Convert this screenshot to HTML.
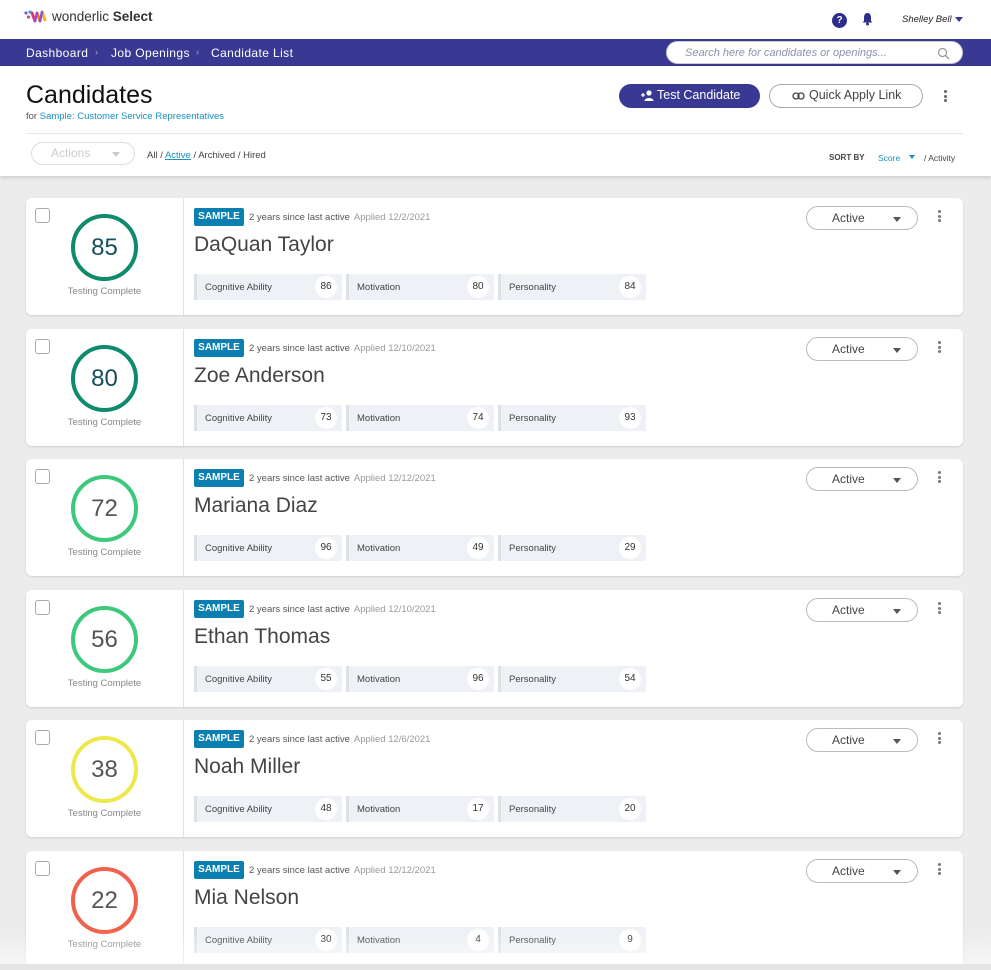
<!DOCTYPE html>
<html><head><style>
*{box-sizing:border-box;margin:0;padding:0}
body{width:991px;height:970px;overflow:hidden;background:#ececec;font-family:"Liberation Sans",sans-serif;color:#333;position:relative}
.abs{position:absolute}
.top{position:absolute;left:0;top:0;width:991px;height:39px;background:#fff}
.nav{position:absolute;left:0;top:39px;width:991px;height:27px;background:#393993;color:#fff;font-size:12px;letter-spacing:.4px}
.nav .sep{position:absolute;top:8px;font-size:9px;color:#aab}
.hdr{position:absolute;left:0;top:66px;width:991px;height:110px;background:#fff;box-shadow:0 2px 3px rgba(0,0,0,.12)}
.card{position:absolute;left:26px;width:937px;height:117px;background:#fff;border-radius:6px;box-shadow:0 1px 2px rgba(0,0,0,.12)}
.cb{position:absolute;left:9px;top:10px;width:15px;height:15px;border:1px solid #aaa;border-radius:3px}
.ring{position:absolute;left:45px;top:16px;width:67px;height:67px;border-radius:50%;border:4px solid;display:flex;align-items:center;justify-content:center;font-size:24px;color:#555}
.tc{position:absolute;left:0;width:157px;top:88px;text-align:center;font-size:9.5px;color:#888}
.div{position:absolute;left:157px;top:0;bottom:0;border-left:1px solid #e2e2e2}
.badge{position:absolute;left:168px;top:10px;width:50px;height:18px;background:#0a7fb0;color:#fff;font-size:10px;font-weight:bold;text-align:center;line-height:18px;border-radius:2px}
.since{position:absolute;left:223px;top:14px;font-size:9.5px;color:#555}
.since span{color:#999;margin-left:4px}
.name{position:absolute;left:168px;top:35px;font-size:21px;color:#444}
.chip{position:absolute;top:76px;width:148px;height:26px;background:#eef1f5;border-left:3px solid #dde1e6;font-size:9.5px;color:#444;padding:8px 8px}
.chip i{position:absolute;right:5px;top:2px;width:22px;height:22px;border-radius:50%;background:#fff;font-style:normal;text-align:center;line-height:22px;font-size:10px;color:#333}
.st{position:absolute;left:780px;top:8px;width:112px;height:24px;border:1px solid #bbb;border-radius:12px;font-size:12px;color:#444;padding:4px 0 0 25px}
.st:after{content:"";position:absolute;right:16px;top:10px;border:4px solid transparent;border-top:5px solid #555}
.keb{position:absolute;left:912px;top:12px;width:3px}
.keb b{display:block;width:3px;height:3px;border-radius:50%;background:#777;margin-bottom:1.5px}
</style></head><body>
<div class="top">
 <svg class="abs" style="left:24px;top:10px" width="26" height="13" viewBox="0 0 26 13">
  <circle cx="2" cy="3" r="1.6" fill="#7b5bd6"/><circle cx="6" cy="2" r="1.6" fill="#3aa6e0"/><circle cx="4.5" cy="7" r="1.6" fill="#e0407a"/>
  <path d="M8 3 L11 11" stroke="#d93a7a" stroke-width="3" stroke-linecap="round"/>
  <path d="M13 3 L16 11" stroke="#f07a3a" stroke-width="3" stroke-linecap="round"/>
  <path d="M18 2 L21 10" stroke="#f5b62e" stroke-width="3" stroke-linecap="round"/>
  <path d="M11 11 L13 3 M16 11 L18 2" stroke="#9b4bc8" stroke-width="2.5" stroke-linecap="round"/>
 </svg>
 <div class="abs" style="left:52px;top:9px;font-size:13.5px;color:#333">wonderlic <b>Select</b></div>
 <div class="abs" style="left:832px;top:13px;width:15px;height:15px;border-radius:50%;background:#2d2d8c;color:#fff;font-size:10px;font-weight:bold;text-align:center;line-height:15px">?</div>
 <svg class="abs" style="left:861px;top:12px" width="13" height="14" viewBox="0 0 13 14"><path d="M6.5 1 C3.5 1 3 4 3 6 L3 9 L1.5 10.5 L11.5 10.5 L10 9 L10 6 C10 4 9.5 1 6.5 1Z" fill="#2d2d8c"/><circle cx="6.5" cy="12" r="1.5" fill="#2d2d8c"/></svg>
 <div class="abs" style="left:902px;top:14px;font-size:9.5px;font-style:italic;color:#222">Shelley Bell</div>
 <div class="abs" style="left:955px;top:17px;border:4px solid transparent;border-top:5px solid #393993"></div>
</div>
<div class="nav">
 <div class="abs" style="left:26px;top:7px">Dashboard</div>
 <div class="sep" style="left:95px">›</div>
 <div class="abs" style="left:111px;top:7px">Job Openings</div>
 <div class="sep" style="left:196px">›</div>
 <div class="abs" style="left:211px;top:7px">Candidate List</div>
 <div class="abs" style="left:666px;top:2px;width:297px;height:23px;background:#fff;border-radius:12px;border:1px solid #ccc;letter-spacing:0">
  <div class="abs" style="left:18px;top:5px;font-size:11px;font-style:italic;color:#8a93ad">Search here for candidates or openings...</div>
  <svg class="abs" style="left:270px;top:5px" width="13" height="13" viewBox="0 0 13 13"><circle cx="5.5" cy="5.5" r="4" fill="none" stroke="#999" stroke-width="1.2"/><path d="M8.5 8.5 L12 12" stroke="#999" stroke-width="1.3"/></svg>
 </div>
</div>
<div class="hdr">
 <div class="abs" style="left:26px;top:15px;font-size:25px;color:#111">Candidates</div>
 <div class="abs" style="left:26px;top:45px;font-size:9.5px;color:#555">for <span style="color:#1a8fc0">Sample: Customer Service Representatives</span></div>
 <div class="abs" style="left:619px;top:18px;width:141px;height:24px;background:#393993;border-radius:12px;color:#fff;font-size:12.5px;padding:4px 0 0 22px">
  <svg class="abs" style="left:22px;top:6px" width="13" height="11" viewBox="0 0 13 11"><circle cx="8" cy="3" r="2.6" fill="#fff"/><path d="M3.5 11 C3.5 7 12.5 7 12.5 11Z" fill="#fff"/><path d="M0 5 H4 M2 3 V7" stroke="#fff" stroke-width="1.2"/></svg>
  <span style="margin-left:16px">Test Candidate</span></div>
 <div class="abs" style="left:769px;top:18px;width:154px;height:24px;border:1px solid #aaa;border-radius:12px;color:#444;font-size:12.5px;padding:3px 0 0 22px">
  <svg class="abs" style="left:22px;top:7px" width="13" height="8" viewBox="0 0 13 8"><rect x="1" y="1" width="6" height="6" rx="3" fill="none" stroke="#444" stroke-width="1.3"/><rect x="6" y="1" width="6" height="6" rx="3" fill="none" stroke="#444" stroke-width="1.3"/></svg>
  <span style="margin-left:17px">Quick Apply Link</span></div>
 <div class="keb" style="left:944px;top:24px"><b style="background:#666"></b><b style="background:#666"></b><b style="background:#666"></b></div>
 <div class="abs" style="left:26px;top:67px;width:937px;border-top:1px solid #e6e6e6"></div>
 <div class="abs" style="left:31px;top:76px;width:104px;height:23px;border:1px solid #ddd;border-radius:12px;color:#ccc;font-size:12px;padding:3px 0 0 19px">Actions<span class="abs" style="left:80px;top:9px;border:4px solid transparent;border-top:5px solid #ccc"></span></div>
 <div class="abs" style="left:147px;top:84px;font-size:9.5px;color:#444">All / <span style="color:#1a8fc0;text-decoration:underline">Active</span> / Archived / Hired</div>
 <div class="abs" style="left:829px;top:87px;font-size:8px;font-weight:bold;color:#444">SORT BY</div>
 <div class="abs" style="left:878px;top:87px;font-size:8.5px;color:#1a8fc0">Score</div>
 <div class="abs" style="left:909px;top:89px;border:3px solid transparent;border-top:4px solid #1a8fc0"></div>
 <div class="abs" style="left:924px;top:87px;font-size:8.5px;color:#444">/ Activity</div>
</div>

<div class="card" style="top:198px"><div class="cb"></div><div class="ring" style="border-color:#0e8a6c;color:#134f5c">85</div><div class="tc">Testing Complete</div><div class="div"></div>
<div class="badge">SAMPLE</div><div class="since">2 years since last active<span>Applied 12/2/2021</span></div><div class="name">DaQuan Taylor</div>
<div class="chip" style="left:168px">Cognitive Ability<i>86</i></div><div class="chip" style="left:320px">Motivation<i>80</i></div><div class="chip" style="left:472px">Personality<i>84</i></div>
<div class="st">Active</div><div class="keb"><b></b><b></b><b></b></div></div>

<div class="card" style="top:329px"><div class="cb"></div><div class="ring" style="border-color:#0e8a6c;color:#134f5c">80</div><div class="tc">Testing Complete</div><div class="div"></div>
<div class="badge">SAMPLE</div><div class="since">2 years since last active<span>Applied 12/10/2021</span></div><div class="name">Zoe Anderson</div>
<div class="chip" style="left:168px">Cognitive Ability<i>73</i></div><div class="chip" style="left:320px">Motivation<i>74</i></div><div class="chip" style="left:472px">Personality<i>93</i></div>
<div class="st">Active</div><div class="keb"><b></b><b></b><b></b></div></div>

<div class="card" style="top:459px"><div class="cb"></div><div class="ring" style="border-color:#3cc97c">72</div><div class="tc">Testing Complete</div><div class="div"></div>
<div class="badge">SAMPLE</div><div class="since">2 years since last active<span>Applied 12/12/2021</span></div><div class="name">Mariana Diaz</div>
<div class="chip" style="left:168px">Cognitive Ability<i>96</i></div><div class="chip" style="left:320px">Motivation<i>49</i></div><div class="chip" style="left:472px">Personality<i>29</i></div>
<div class="st">Active</div><div class="keb"><b></b><b></b><b></b></div></div>

<div class="card" style="top:590px"><div class="cb"></div><div class="ring" style="border-color:#3cc97c">56</div><div class="tc">Testing Complete</div><div class="div"></div>
<div class="badge">SAMPLE</div><div class="since">2 years since last active<span>Applied 12/10/2021</span></div><div class="name">Ethan Thomas</div>
<div class="chip" style="left:168px">Cognitive Ability<i>55</i></div><div class="chip" style="left:320px">Motivation<i>96</i></div><div class="chip" style="left:472px">Personality<i>54</i></div>
<div class="st">Active</div><div class="keb"><b></b><b></b><b></b></div></div>

<div class="card" style="top:720px"><div class="cb"></div><div class="ring" style="border-color:#ece84e">38</div><div class="tc">Testing Complete</div><div class="div"></div>
<div class="badge">SAMPLE</div><div class="since">2 years since last active<span>Applied 12/6/2021</span></div><div class="name">Noah Miller</div>
<div class="chip" style="left:168px">Cognitive Ability<i>48</i></div><div class="chip" style="left:320px">Motivation<i>17</i></div><div class="chip" style="left:472px">Personality<i>20</i></div>
<div class="st">Active</div><div class="keb"><b></b><b></b><b></b></div></div>

<div class="card" style="top:851px"><div class="cb"></div><div class="ring" style="border-color:#f0624c">22</div><div class="tc">Testing Complete</div><div class="div"></div>
<div class="badge">SAMPLE</div><div class="since">2 years since last active<span>Applied 12/12/2021</span></div><div class="name">Mia Nelson</div>
<div class="chip" style="left:168px">Cognitive Ability<i>30</i></div><div class="chip" style="left:320px">Motivation<i>4</i></div><div class="chip" style="left:472px">Personality<i>9</i></div>
<div class="st">Active</div><div class="keb"><b></b><b></b><b></b></div></div>

<div class="abs" style="left:0;top:930px;width:991px;height:34px;background:linear-gradient(rgba(255,255,255,0),rgba(255,255,255,.5))"></div>
<div class="abs" style="left:0;top:964px;width:991px;height:6px;background:#e4e4e4"></div>
</body></html>
